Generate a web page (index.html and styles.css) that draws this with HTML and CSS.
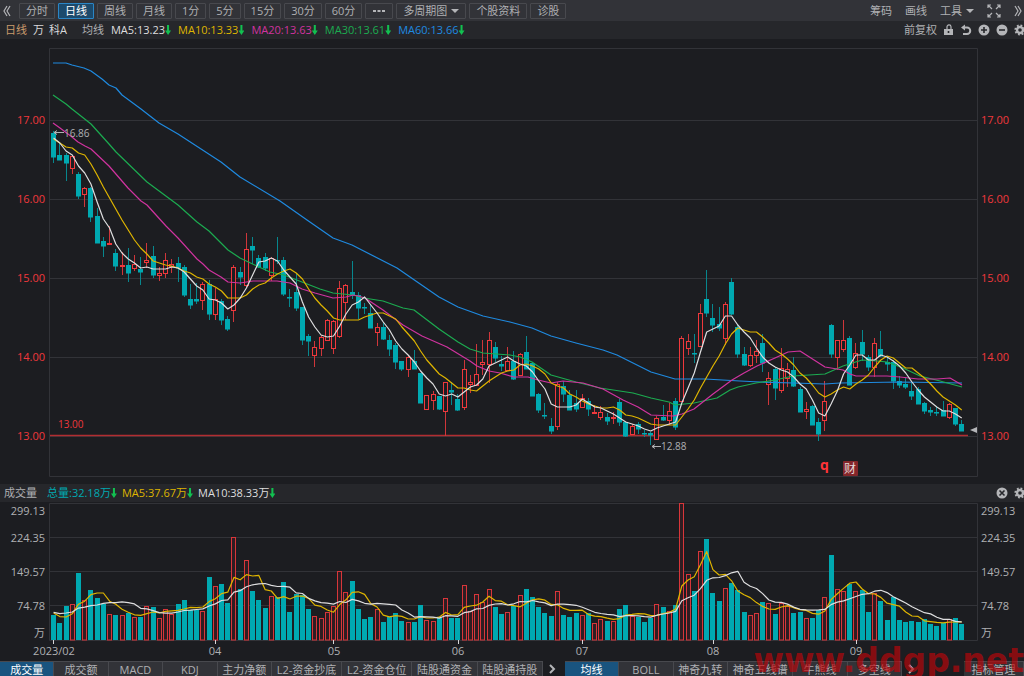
FILE: index.html
```html
<!DOCTYPE html>
<html lang="zh-CN">
<head>
<meta charset="UTF-8">
<meta name="viewport" content="width=device-width, initial-scale=1.0">
<title>万科A 日线</title>
<link rel="stylesheet" href="styles.css">
</head>
<body>
  <header class="toolbar">
    <button class="more" aria-label="向左">
      <svg width="8" height="12" viewBox="0 0 8 12"><path d="M4 1 1 6l3 5M7 1 4 6l3 5"/></svg>
    </button>
    <nav class="periods">
      <button>分时</button>
      <button class="active">日线</button>
      <button>周线</button>
      <button>月线</button>
      <button>1分</button>
      <button>5分</button>
      <button>15分</button>
      <button>30分</button>
      <button>60分</button>
      <button class="extra" aria-label="更多周期"><svg class="dots" width="12" height="4" viewBox="0 0 12 4"><path d="M0 1h3v2H0zM4.500 1h3v2h-3zM9 1h3v2H9z"/></svg></button>
      <span class="dropdown">
        <select aria-label="多周期图"><option>多周期图</option></select>
      </span>
      <button>个股资料</button>
      <button>诊股</button>
    </nav>
    <div class="tools">
      <button>筹码</button>
      <button>画线</button>
      <span class="dropdown">
        <select aria-label="工具"><option>工具</option></select>
      </span>
      <button aria-label="全屏">
        <svg width="14" height="14" viewBox="0 0 14 14"><path d="M1 4V1h3M1 1l4 4M10 1h3v3M13 1 9 5M1 10v3h3M1 13l4-4M13 10v3h-3M13 13 9 9"/></svg>
      </button>
      <button aria-label="向右">
        <svg width="8" height="12" viewBox="0 0 8 12"><path d="m1 1 3 5-3 5M4 1l3 5-3 5"/></svg>
      </button>
    </div>
  </header>

  <div class="legend">
    <span class="period">日线</span>
    <span class="stock"><span>万</span><span>科A</span></span>
    <span class="label">均线</span>
    <span class="ma white">MA5:13.23<i class="down"></i></span>
    <span class="ma yellow">MA10:13.33<i class="down"></i></span>
    <span class="ma magenta">MA20:13.63<i class="down"></i></span>
    <span class="ma green">MA30:13.61<i class="down"></i></span>
    <span class="ma blue">MA60:13.66<i class="down"></i></span>
    <div class="actions">
      <button>前复权</button>
      <button aria-label="锁定">
        <svg width="11" height="12" viewBox="0 0 11 12"><path class="solid" fill-rule="evenodd" d="M1 5h9v6H1zM4.7 7v2h1.6V7z"/><path d="M4 5V3a2 2 0 0 1 4-.2V5"/></svg>
      </button>
      <button aria-label="撤销">
        <svg width="12" height="12" viewBox="0 0 12 12"><path class="thick" d="M3 3.5h4a3.2 3.2 0 0 1 0 6.5H3"/><path class="solid" d="M1 3.5 5 .5v6z"/></svg>
      </button>
      <button aria-label="放大">
        <svg width="12" height="12" viewBox="0 0 12 12"><circle class="solid" cx="6" cy="6" r="5.5"/><path class="cut" d="M3 6h6M6 3v6"/></svg>
      </button>
      <button aria-label="缩小">
        <svg width="12" height="12" viewBox="0 0 12 12"><circle class="solid" cx="6" cy="6" r="5.5"/><path class="cut" d="M3 6h6"/></svg>
      </button>
      <button aria-label="设置">
        <svg width="12" height="12" viewBox="0 0 12 12"><circle class="teeth" cx="6" cy="6" r="4.6"/><circle class="ring" cx="6" cy="6" r="3"/></svg>
      </button>
    </div>
  </div>

  <main>
    <svg class="chart" id="price" viewBox="0 39 1024 445">
      <path class="grid" d="M49.5 48.5h928v428h-928zM49 120.5h928M49 199.5h928M49 278.5h928M49 357.5h928M49 436.5h928"/>
      <g class="axis red end">
        <text x="45" y="124">17.00</text>
        <text x="45" y="203">16.00</text>
        <text x="45" y="282">15.00</text>
        <text x="45" y="361">14.00</text>
        <text x="45" y="440">13.00</text>
      </g>
      <g class="axis red">
        <text x="981" y="124">17.00</text>
        <text x="981" y="203">16.00</text>
        <text x="981" y="282">15.00</text>
        <text x="981" y="361">14.00</text>
        <text x="981" y="440">13.00</text>
      </g>
      <path class="support" d="M50 435.5h918"/>
      <text class="note red" x="58" y="428">13.00</text>
      <g id="candles"></g>
      <g id="averages"></g>
      <path class="pointer" d="M54 132.5h10M57 130.5l-3 2 3 2M652 446.5h9M655 444.5l-3 2 3 2"/>
      <text class="note" x="64" y="137">16.86</text>
      <text class="note" x="661" y="450">12.88</text>
      <path class="marker" d="m970 430 7-3v6z"/>
      <text class="event" x="820" y="470">q</text>
      <rect class="badge" x="843" y="461" width="15" height="15" rx="1"/>
      <text class="badge-text" x="850" y="473">财</text>
    </svg>

    <div class="legend volume-legend">
      <span class="label">成交量</span>
      <span class="ma teal">总量:32.18万<i class="down"></i></span>
      <span class="ma yellow">MA5:37.67万<i class="down"></i></span>
      <span class="ma white">MA10:38.33万<i class="down"></i></span>
      <div class="actions">
        <button aria-label="关闭">
          <svg width="12" height="12" viewBox="0 0 12 12"><circle class="solid" cx="6" cy="6" r="5.5"/><path class="cut" d="m3.500 3.500 5 5M8.500 3.500l-5 5"/></svg>
        </button>
        <button aria-label="设置">
          <svg width="12" height="12" viewBox="0 0 12 12"><circle class="teeth" cx="6" cy="6" r="4.6"/><circle class="ring" cx="6" cy="6" r="3"/></svg>
        </button>
      </div>
    </div>

    <svg class="chart" id="volume" viewBox="0 502 1024 159">
      <path class="grid" d="M49.5 503.5h928v137h-928zM49 537.5h928M49 571.5h928M49 605.5h928"/>
      <g class="axis end">
        <text x="45" y="515">299.13</text>
        <text x="45" y="542">224.35</text>
        <text x="45" y="576">149.57</text>
        <text x="45" y="610">74.78</text>
        <text x="45" y="637">万</text>
      </g>
      <g class="axis">
        <text x="981" y="515">299.13</text>
        <text x="981" y="542">224.35</text>
        <text x="981" y="576">149.57</text>
        <text x="981" y="610">74.78</text>
        <text x="981" y="637">万</text>
      </g>
      <g id="bars"></g>
      <path class="ticks" d="M53.5 640v4M215.5 640v4M333.5 640v4M458.5 640v4M582.5 640v4M713.5 640v4M856.5 640v4"/>
      <g class="axis middle">
        <text x="54" y="655">2023/02</text>
        <text x="215" y="655">04</text>
        <text x="334" y="655">05</text>
        <text x="458" y="655">06</text>
        <text x="582" y="655">07</text>
        <text x="713" y="655">08</text>
        <text x="856" y="655">09</text>
      </g>
    </svg>
  </main>

  <footer class="tabs">
    <button class="active">成交量</button>
    <button>成交额</button>
    <button>MACD</button>
    <button>KDJ</button>
    <button>主力净额</button>
    <button class="wide">L2-资金抄底</button>
    <button class="wide">L2-资金仓位</button>
    <button class="mid">陆股通资金</button>
    <button class="mid">陆股通持股</button>
    <button class="arrow" aria-label="更多指标"><svg width="7" height="10" viewBox="0 0 7 10"><path d="m1 1 4 4-4 4"/></svg></button>
    <button class="active">均线</button>
    <button>BOLL</button>
    <button>神奇九转</button>
    <button class="mid">神奇五线谱</button>
    <button>牛熊线</button>
    <button>多空线</button>
    <button class="arrow" aria-label="更多均线"><svg width="7" height="10" viewBox="0 0 7 10"><path d="m1 1 4 4-4 4"/></svg></button>
    <button class="manage">指标管理</button>
  </footer>
  <div class="watermark">www.ddgp.net</div>

<script src="script.js"></script>
</body>
</html>
```
FILE: styles.css
```css
:root {
  --bg: #1c1d21;
  --bar: #323338;
  --subbar: #26272b;
  --line: #323338;
  --text: #afb0b3;
  --red: #f0383c;
  --teal: #00a9b1;
  --white: #dededf;
  --yellow: #dfb500;
  --magenta: #d0339f;
  --green: #1cab50;
  --blue: #1f8ae0;
}

* {
  margin: 0;
  padding: 0;
  box-sizing: border-box;
}

body {
  font-family: "Open Sans", "Noto Sans CJK SC", sans-serif;
  font-size: 11px;
  line-height: 14px;
  background: var(--bg);
  color: var(--text);
  min-height: 100vh;
  display: flex;
  flex-direction: column;
  position: relative;
  overflow: hidden;
}

button,
select {
  font: inherit;
  color: inherit;
  background: none;
  border: none;
  white-space: nowrap;
  cursor: pointer;
}

button svg {
  display: block;
  fill: none;
  stroke: #b4b5b8;
  stroke-width: 1.2;
}

/* top toolbar */
.toolbar {
  display: flex;
  align-items: center;
  gap: 8px;
  height: 21px;
  padding: 0 2px 0 3px;
  background: var(--bar);
}

.periods {
  display: flex;
  gap: 3px;
}

.periods button,
.periods .dropdown {
  height: 16px;
  padding: 0 6px;
  border: 1px solid #48494e;
  border-radius: 1px;
}

.periods button.active {
  color: #fff;
  background: #1c4a6c;
  border-color: #2a86c6;
}

.periods .extra {
  padding: 0 7px;
}

.periods .dots {
  fill: #b4b5b8;
  stroke: none;
}

.dropdown {
  display: flex;
  align-items: center;
  gap: 4px;
}

.dropdown select {
  appearance: none;
  outline: none;
}

.dropdown::after {
  content: "";
  border: 4px solid transparent;
  border-top-color: #b4b5b8;
  border-bottom: 0;
}

.tools {
  display: flex;
  align-items: center;
  gap: 13px;
  margin-left: auto;
}

/* indicator rows */
.legend {
  display: flex;
  align-items: center;
  height: 18px;
  padding-left: 5px;
  background: var(--subbar);
  white-space: nowrap;
}

.period {
  color: #c99a6b;
  margin-right: 6px;
}

.stock {
  display: flex;
  gap: 5px;
  color: #d8d8da;
  margin-right: 15px;
}

.legend .label {
  margin-right: 7px;
}

.ma {
  display: flex;
  align-items: center;
  margin-right: 7px;
}

.down {
  width: 6px;
  height: 10px;
  background: #12c050;
  clip-path: polygon(33% 0, 67% 0, 67% 55%, 100% 55%, 50% 100%, 0 55%, 33% 55%);
}

.white { color: var(--white); }
.yellow { color: var(--yellow); }
.magenta { color: var(--magenta); }
.green { color: var(--green); }
.blue { color: var(--blue); }
.teal { color: var(--teal); }

.actions {
  display: flex;
  align-items: center;
  gap: 6px;
  margin-left: auto;
  margin-right: -2px;
}

.actions .solid {
  fill: #b4b5b8;
  stroke: none;
}

.actions .thick {
  stroke-width: 2;
}

.actions .cut {
  stroke: var(--subbar);
  stroke-width: 1.6;
}

.actions .teeth {
  stroke-width: 2;
  stroke-dasharray: 1.8 1.8;
}

.actions .ring {
  stroke-width: 2.4;
}

.volume-legend {
  padding-left: 4px;
}

.volume-legend .label {
  margin-right: 10px;
}

.volume-legend .ma {
  margin-right: 5px;
}

/* charts */
.chart {
  display: block;
  width: 100%;
  height: auto;
}

.chart text {
  font-size: 11px;
  fill: var(--text);
}

.chart .end text {
  text-anchor: end;
}

.chart .middle text {
  text-anchor: middle;
}

.chart .red text,
.chart text.red {
  fill: var(--red);
}

.grid {
  fill: none;
  stroke: var(--line);
}

.support {
  stroke: #b22d31;
  stroke-width: 1.5;
}

.pointer {
  fill: none;
  stroke: var(--text);
}

.marker {
  fill: #b4b5b8;
}

.chart .note {
  font-size: 10px;
}

.chart .event {
  font-size: 14px;
  font-weight: 700;
  fill: #ff3438;
}

.badge {
  fill: #84262a;
}

.chart .badge-text {
  font-size: 12px;
  fill: #e4d8d8;
  text-anchor: middle;
}

.ticks {
  stroke: #d8d8da;
}

.up {
  fill: var(--bg);
  stroke: var(--red);
}

.fall {
  fill: var(--teal);
  stroke: none;
}

.wick-up {
  stroke: #d0363a;
}

.wick-fall {
  stroke: #07878e;
}

.vol-up {
  fill: #2f1d22;
  stroke: #d8363a;
}

.avg {
  fill: none;
  stroke: currentColor;
  stroke-width: 1.2;
  stroke-linejoin: round;
}

/* bottom tabs */
.tabs {
  display: flex;
  height: 15px;
  background: var(--bg);
  overflow: hidden;
}

.tabs button {
  flex: 54 1 0;
  min-width: 0;
  height: 15px;
  line-height: 13px;
  background: var(--bar);
  border-top: 1px solid #48494e;
  border-right: 1px solid #48494e;
}

.tabs .wide {
  flex-grow: 70;
}

.tabs .mid {
  flex-grow: 65;
}

.tabs .active {
  color: #fff;
  background: #19547f;
}

.tabs .arrow {
  flex: 0 0 22px;
  padding-left: 6px;
  background: none;
  border: none;
}

.tabs .arrow svg {
  stroke-width: 2;
}

.tabs .manage {
  flex: 0 0 60px;
  margin-left: 40px;
}

.watermark {
  position: absolute;
  right: 0;
  bottom: -4px;
  font: 700 33px/38px "DejaVu Sans", sans-serif;
  color: rgba(190, 6, 10, 0.68);
  pointer-events: none;
}
```
FILE: script.js
```js
const STEP = 6.22;
const FIRST = 53.6;
const BASE = 640;

// one entry per day: direction, high, body top, body bottom, low, volume
const days = `
d 131 133 157 163 25,d 143 155 160 160 17,d 153 155 163 181 34,u 155 156 168 174 36,d 172 174 196 199 67
u 187 188 194 207 40,d 187 188 217 222 50,d 208 216 243 243 42,d 237 241 246 257 36,u 226 243 244 244 26
d 249 253 266 271 25,u 252 265 266 275 25,d 248 265 273 282 27,u 255 264 268 271 23,d 257 269 272 285 23
u 243 260 262 268 34,d 246 256 275 278 33,u 267 273 275 281 22,u 253 260 273 278 31,u 259 264 266 273 26
d 257 263 268 282 36,d 265 267 295 297 40,d 284 299 305 309 30,d 283 299 301 304 30,u 282 284 300 310 29
d 280 284 314 320 63,u 288 299 314 320 54,d 299 301 320 325 56,d 316 319 329 331 37,u 265 267 310 322 103
d 267 272 277 285 51,u 233 249 285 287 80,d 237 246 250 264 49,d 255 258 267 268 40,d 253 257 268 271 32
u 257 258 275 281 44,d 237 260 261 264 43,d 257 260 294 296 58,d 289 297 298 307 28,d 273 292 308 311 46
d 307 307 340 345 45,d 334 336 341 356 31,u 341 347 355 367 24,u 335 337 348 356 22,u 319 320 340 340 28
u 320 321 348 354 34,u 281 288 336 338 69,u 284 285 302 320 48,d 261 292 295 299 59,d 292 295 308 319 31
d 303 307 308 314 21,d 305 313 328 328 23,u 323 327 332 346 31,d 322 327 339 340 18,d 335 340 349 356 23
d 343 345 362 369 27,d 361 361 369 371 19,u 356 357 369 377 18,d 350 361 369 369 18,d 373 373 403 403 35
u 395 395 409 410 20,u 391 394 400 410 19,d 396 396 409 410 22,u 382 382 411 436 42,d 382 390 392 405 22
d 394 399 410 411 22,u 360 369 407 410 55,u 375 382 384 393 29,u 344 374 385 386 46,u 340 362 364 375 38
u 332 340 364 383 51,d 342 347 358 362 33,d 356 364 366 371 26,u 347 361 370 371 28,d 351 361 379 380 34
u 353 354 375 375 45,d 336 352 369 369 51,d 363 363 396 396 43,d 393 394 410 413 33,d 403 415 416 419 27
d 418 426 431 434 24,u 382 384 426 430 49,d 381 386 394 402 25,d 390 395 410 410 23,d 390 403 409 412 27
u 394 398 407 407 25,d 398 401 409 416 27,u 405 412 413 414 17,u 406 412 417 420 21,d 413 417 421 425 19
u 412 417 418 424 19,d 399 402 422 426 31,d 422 422 436 437 35,u 424 426 434 434 24,d 422 424 429 434 23
d 430 433 434 437 18,d 432 433 435 445 22,u 416 418 439 440 36,d 405 417 420 421 33,u 403 411 420 425 29
d 398 401 427 430 35,u 336 338 401 401 137,u 334 341 348 355 66,d 334 353 354 363 49,u 304 313 346 347 89
d 270 299 313 317 101,d 304 318 325 332 47,d 307 324 328 331 39,u 302 304 338 345 52,d 278 282 314 315 57
d 325 327 354 358 50,d 347 354 365 366 28,u 347 355 365 367 25,u 340 351 355 363 27,d 334 343 363 372 38
u 372 378 384 405 37,d 367 369 388 400 26,u 348 368 390 393 37,u 363 369 378 387 34,d 357 370 386 387 27
d 387 389 412 412 28,u 402 409 411 419 22,d 405 406 425 425 22,d 418 422 434 441 30,u 381 401 420 431 43
d 324 325 354 358 85,u 340 340 357 370 51,u 320 340 349 352 49,d 336 338 385 385 56,u 343 353 367 369 49
d 330 342 354 361 50,d 355 357 367 371 28,u 338 343 367 377 47,d 331 349 356 357 39,d 357 362 364 371 20
d 360 362 381 389 43,d 376 381 385 388 20,d 377 384 387 389 18,d 383 391 396 400 19,d 387 389 404 404 18
d 402 403 411 414 21,d 407 410 412 416 16,d 406 412 413 416 14,d 401 410 416 416 17,u 403 404 417 419 21
d 408 408 424 426 22,d 420 424 431 431 16`.trim().split(/[,\n]/).map(row => {
  const [dir, ...n] = row.split(' ');
  const [high, top, bottom, low, volume] = n.map(Number);
  return { up: dir === 'u', high, top, bottom, low, volume };
});

// daily values
const ma5 = [138,143,151,155,166,173,184,202,219,228,244,253,259,263,268,267,269,269,269,267,268,272,279,286,290,299,300,303,309,305,298,288,275,262,261,258,261,270,277,284,302,317,327,335,337,336,326,314,305,302,297,305,313,322,330,341,349,355,362,371,378,384,394,396,394,397,392,387,385,379,366,363,360,357,361,364,366,372,381,389,404,407,407,407,405,399,403,407,408,411,414,418,422,424,426,429,431,428,426,424,422,403,388,373,352,332,329,326,316,316,325,332,338,348,357,363,367,370,372,377,384,389,400,413,416,404,391,374,365,355,355,360,360,355,357,361,366,373,382,390,397,402,407,411,411,414,418];
const ma10 = [139,143,147,148,153,155,164,175,187,198,209,220,230,240,248,254,261,263,265,266,268,271,273,277,279,284,287,291,298,298,298,295,289,285,283,278,274,271,269,273,279,289,298,305,311,318,320,320,320,320,317,315,313,313,316,319,327,334,341,351,360,367,374,378,383,388,388,390,391,386,381,377,373,371,370,365,364,366,369,374,383,386,388,394,397,401,404,406,408,408,407,410,415,416,418,421,424,425,425,425,425,417,409,400,388,377,366,356,344,334,328,330,332,332,337,343,350,354,359,365,373,378,385,393,397,394,390,387,389,384,380,375,367,360,356,358,363,368,368,373,378,384,391,397,401,405,410];

// slow averages, turning points only
const slow = {
  magenta: '53,123 60,128 72,137 78,142 85,146 91,149 109,166 128,188 141,201 147,205 166,226 178,238 197,259 203,264 209,270 221,277 228,282 240,283 253,281 277,281 290,283 302,289 315,293 333,298 346,297 353,295 358,296 365,298 383,310 403,325 422,336 447,347 470,361 477,366 489,371 500,373 514,377 528,377 538,380 551,383 563,381 583,383 603,389 623,400 638,407 651,415 673,416 682,414 694,409 713,394 732,380 744,373 757,366 775,358 788,352 800,351 825,367 843,370 850,374 856,376 887,376 900,377 918,379 937,379 950,378 962,385',
  green: '53,95 66,104 72,109 91,124 109,144 116,152 147,182 178,205 197,222 209,231 228,250 240,258 259,267 270,272 284,275 302,282 320,289 333,293 353,295 364,298 383,301 403,308 414,310 439,329 458,342 470,349 483,353 510,355 520,357 532,362 551,375 576,382 600,388 633,393 651,398 669,402 675,405 694,403 717,398 730,390 738,387 756,383 775,380 793,376 825,374 843,366 862,360 877,361 887,362 903,368 920,376 940,381 962,387',
  blue: '53,63 66,63 72,65 84,68 91,71 102,79 109,85 116,88 122,95 141,109 159,123 178,134 221,162 240,177 280,201 307,220 333,238 352,245 397,268 439,297 458,307 483,316 510,322 532,328 551,336 576,343 603,350 617,355 651,372 675,379 705,379 740,381 760,382 793,383 825,384 840,383 900,382 962,383'
};

const x = i => FIRST + i * STEP;
const line = (points, cls) => `<polyline class="avg ${cls}" points="${points}"/>`;
const daily = (values, cls) => line(values.map((y, i) => `${x(i)},${y}`).join(' '), cls);

function box(left, top, bottom, up, upClass) {
  const height = Math.max(bottom - top, 1);
  return up
    ? `<rect class="${upClass}" x="${left + 0.5}" y="${top + 0.5}" width="4" height="${height}"/>`
    : `<rect class="fall" x="${left}" y="${top}" width="5" height="${height + 0.5}"/>`;
}

function drawPrices() {
  document.getElementById('candles').innerHTML = days.map((d, i) => {
    const left = Math.round(x(i) - 2.5);
    return `<path class="${d.up ? 'wick-up' : 'wick-fall'}" d="M${left + 2.5} ${d.high}V${d.low}"/>`
      + box(left, d.top, d.bottom, d.up, 'up');
  }).join('');
  document.getElementById('averages').innerHTML =
    line(slow.blue, 'blue') + line(slow.green, 'green') + line(slow.magenta, 'magenta')
    + daily(ma10, 'yellow') + daily(ma5, 'white');
}

function drawVolume() {
  // volumes of the days before the first bar, needed by the averages
  const before = [30, 28, 26, 28, 30, 35, 36, 20, 19];
  const all = before.concat(days.map(d => d.volume));
  const average = n => days.map((d, i) => {
    const end = i + before.length + 1;
    return BASE - all.slice(end - n, end).reduce((a, b) => a + b) / n;
  });
  document.getElementById('bars').innerHTML = days.map((d, i) =>
    box(Math.round(x(i) - 2.5), BASE - d.volume, BASE - 0.5, d.up, 'vol-up')
  ).join('') + daily(average(5), 'yellow') + daily(average(10), 'white');
}

drawPrices();
drawVolume();
```
